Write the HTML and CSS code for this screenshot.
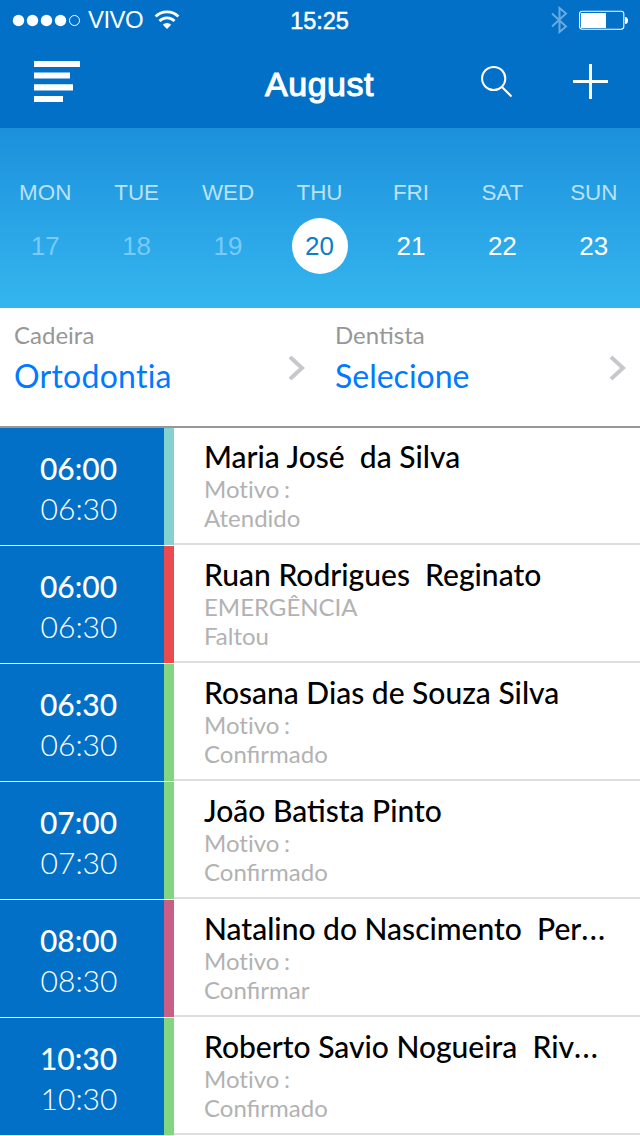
FILE: index.html
```html
<!DOCTYPE html>
<html lang="pt-BR">
<head>
<meta charset="utf-8">
<title>August</title>
<link rel="stylesheet" href="styles.css">
</head>
<body>
<header class="top">
  <div class="status">
    <div class="carrier">
      <svg class="signal" width="70" height="14" viewBox="0 0 70 14"><g fill="#fff"><circle cx="6.5" cy="7.5" r="5.7"/><circle cx="20.5" cy="7.5" r="5.7"/><circle cx="34.5" cy="7.5" r="5.7"/><circle cx="48.5" cy="7.5" r="5.7"/></g><circle cx="62.5" cy="7.5" r="5" fill="none" stroke="#fff"/></svg>
      <span class="operator">VIVO</span>
      <svg class="wifi" width="26" height="20" viewBox="0 0 26 20"><g fill="none" stroke="#fff" stroke-width="2.8"><path d="M1.6 6.6a16.2 16.2 0 0 1 22.8 0"/><path d="M5.5 10.9a10.6 10.6 0 0 1 15 0"/></g><path d="M13 19l-4.2-4.2a6 6 0 0 1 8.4 0z" fill="#fff"/></svg>
    </div>
    <span class="clock">15:25</span>
    <div class="power">
      <svg width="17" height="28" viewBox="0 0 17 28"><path d="M1 7.5L15 20.5L8.5 26V2L15 7.5L1 20.5" fill="none" stroke="#68aae0" stroke-width="2"/></svg>
      <svg width="50" height="20" viewBox="0 0 50 20"><rect x=".6" y="1.2" width="44.2" height="18" rx="2.6" fill="none" stroke="#fff" stroke-width="1.1"/><path d="M2 3h25v15H2zM46 7q3 0 3 3.5t-3 3.5z" fill="#fff"/></svg>
    </div>
  </div>
  <nav class="bar">
    <svg class="menu" width="46" height="41" viewBox="0 0 46 41"><path d="M0 0h46v6H0zM0 11.6h36v6H0zM0 23.3h39v6.2H0zM0 35h29v6H0z" fill="#fff"/></svg>
    <h1 class="month">August</h1>
    <div class="actions">
      <svg class="search" width="32" height="33" viewBox="0 0 32 33"><g fill="none" stroke="#fff" stroke-width="2"><circle cx="12.7" cy="13.5" r="11.6"/><path d="M21 22L30.5 31.5"/></g></svg>
      <svg width="35" height="35" viewBox="0 0 35 35"><path d="M0 17.5h35M17.5 0v35" stroke="#fff" stroke-width="3"/></svg>
    </div>
  </nav>
</header>
<section class="week">
  <div class="day past"><span class="name">MON</span><span class="date">17</span></div>
  <div class="day past"><span class="name">TUE</span><span class="date">18</span></div>
  <div class="day past"><span class="name">WED</span><span class="date">19</span></div>
  <div class="day today"><span class="name">THU</span><span class="date">20</span></div>
  <div class="day"><span class="name">FRI</span><span class="date">21</span></div>
  <div class="day"><span class="name">SAT</span><span class="date">22</span></div>
  <div class="day"><span class="name">SUN</span><span class="date">23</span></div>
</section>
<section class="filters">
  <div class="filter first"><div><div class="label">Cadeira</div><div class="value chair">Ortodontia</div></div><svg width="17" height="26" viewBox="0 0 17 26"><path d="M2 2L14 13L2 24" fill="none" stroke="#c7c7cc" stroke-width="4"/></svg></div>
  <div class="filter"><div><div class="label">Dentista</div><div class="value">Selecione</div></div><svg width="17" height="26" viewBox="0 0 17 26"><path d="M2 2L14 13L2 24" fill="none" stroke="#c7c7cc" stroke-width="4"/></svg></div>
</section>
<main class="agenda">
  <article class="row"><div class="time attended"><b>06:00</b><span>06:30</span></div><div class="info"><h2>Maria José  da Silva</h2><p class="reason">Motivo :</p><p>Atendido</p></div></article>
  <article class="row"><div class="time missed"><b>06:00</b><span>06:30</span></div><div class="info"><h2>Ruan Rodrigues  Reginato</h2><p>EMERGÊNCIA</p><p>Faltou</p></div></article>
  <article class="row"><div class="time confirmed"><b>06:30</b><span>06:30</span></div><div class="info"><h2>Rosana Dias de Souza Silva</h2><p class="reason">Motivo :</p><p>Confirmado</p></div></article>
  <article class="row"><div class="time confirmed"><b>07:00</b><span>07:30</span></div><div class="info"><h2>João Batista Pinto</h2><p class="reason">Motivo :</p><p>Confirmado</p></div></article>
  <article class="row"><div class="time pending"><b>08:00</b><span>08:30</span></div><div class="info"><h2>Natalino do Nascimento  Per<span class="dots">...</span></h2><p class="reason">Motivo :</p><p>Confirmar</p></div></article>
  <article class="row"><div class="time confirmed"><b>10:30</b><span>10:30</span></div><div class="info"><h2>Roberto Savio Nogueira  Riv<span class="dots">...</span></h2><p class="reason">Motivo :</p><p>Confirmado</p></div></article>
</main>
</body>
</html>
```
FILE: styles.css
```css
* { box-sizing: border-box; }
body { margin: 0; width: 640px; height: 1136px; overflow: hidden; background: #fff; font-family: Lato, sans-serif; }
svg { display: block; flex: none; }
h1, h2, p { margin: 0; }

.top { height: 128px; background: #0270c7; color: #fff; font-family: "Liberation Sans", Arial, sans-serif; }
.status { display: grid; grid-template-columns: 1fr auto 1fr; height: 40px; padding: 0 11px 0 12px; align-items: center; }
.carrier { display: flex; align-items: center; height: 40px; }
.operator { font-size: 24px; line-height: 40px; margin-left: 6px; letter-spacing: -.6px; }
.wifi { margin: 0 0 1px 11px; }
.clock { font-size: 23.5px; line-height: 38px; letter-spacing: -.1px; -webkit-text-stroke: .5px #fff; padding: 2px 2px 0 0; }
.power { display: flex; justify-content: flex-end; align-items: center; gap: 11px; }
.bar { display: grid; grid-template-columns: 1fr auto 1fr; height: 88px; padding: 0 32px 0 34px; }
.menu { margin-top: 21px; }
.month { font-size: 34px; line-height: 88px; font-weight: 400; letter-spacing: .5px; -webkit-text-stroke: 1.1px #fff; padding-right: 3px; }
.actions { display: flex; justify-content: flex-end; gap: 60px; padding-top: 24px; }
.search { margin-top: 1px; }

.week { display: grid; grid-template-columns: repeat(7, 1fr); height: 180px; padding-top: 51px; background: linear-gradient(#1c90dc, #35b6ef); font-family: "Liberation Sans", Arial, sans-serif; text-align: center; }
.day { display: flex; flex-direction: column; align-items: center; color: #fff; }
.name { font-size: 22.4px; line-height: 28px; padding-right: 1px; color: #b9e2fb; }
.date { width: 56px; height: 56px; margin-top: 11px; border-radius: 50%; font-size: 26px; line-height: 56px; padding-right: 1px; }
.past .date { color: #78cbfa; }
.today .date { background: #fff; color: #0b80c6; }

.filters { display: flex; height: 120px; border-bottom: 2px solid #979797; }
.filter { display: flex; justify-content: space-between; flex: 1; padding: 12px 14px 0; }
.filter.first { flex: 0 0 321px; padding-right: 16px; }
.label { font-size: 24px; line-height: 29px; color: #979797; }
.value { font-size: 32px; line-height: 38px; margin-top: 8px; color: #007aff; }
.value.chair { font-variant-ligatures: none; letter-spacing: .25px; }
.filter svg { margin-top: 35px; }

.row { display: flex; height: 118px; padding-bottom: 1px; }
.time { display: flex; flex-direction: column; width: 174px; padding: 20px 7px 0 0; border-right: 10px solid; background: #0270c7; text-align: center; font-size: 30px; line-height: 40px; }
.time b { color: #fff; font-weight: 500; }
.time span { color: #fff; font-weight: 300; padding-left: 1px; }
.attended { border-color: #84d2cf; }
.missed { border-color: #e94b4e; }
.confirmed { border-color: #82d682; }
.pending { border-color: #c95f87; }
.info { flex: 1; padding: 11px 0 0 30px; border-bottom: 2px solid #dedede; white-space: pre; }
.info h2 { font-size: 30px; line-height: 35px; font-weight: 500; color: #000; }
.dots { letter-spacing: 1.3px; }
.info p { font-size: 24px; line-height: 29px; color: #b2b2b2; }
.info .reason { font-variant-ligatures: none; word-spacing: -1.5px; }
```
